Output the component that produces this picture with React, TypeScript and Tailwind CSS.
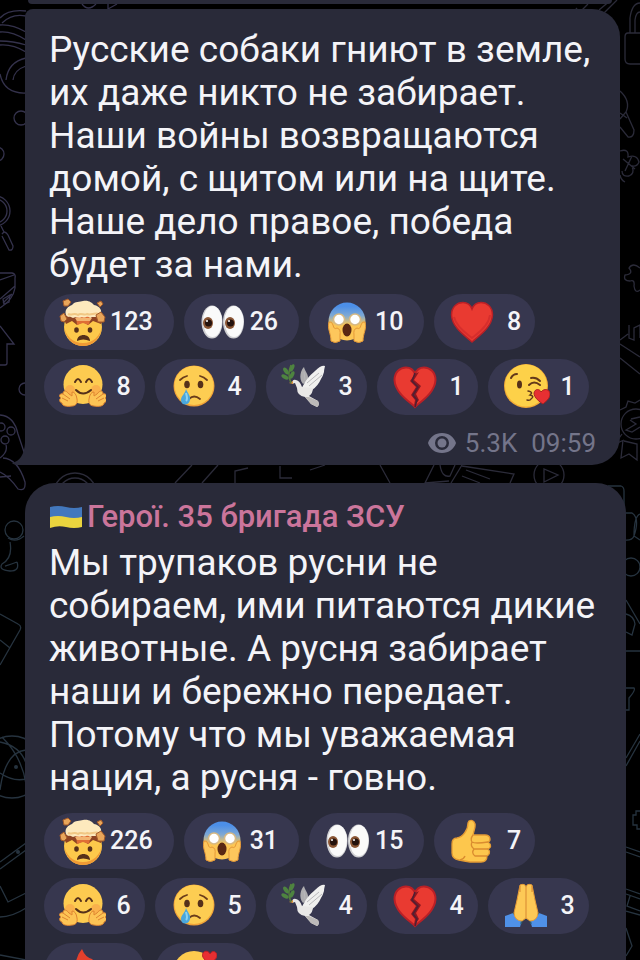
import type { ReactNode } from "react"

const HEART = "M24 44C19 39 4 30 3.500 17C3.500 9 9 4.500 15 4.500C19.500 4.500 22.500 7 24 11C25.500 7 28.500 4.500 33 4.500C39 4.500 44.500 9 44.500 17C44 30 29 39 24 44Z"

const emojis: Record<string, ReactNode> = {
    exploding: <>
        <circle cx="25" cy="29" r="19" fill="#fdc94b" />
        <path d="M6 27C7 41 15 48 25 48S43 41 44 27C43 38 35 45 25 45S7 38 6 27Z" fill="#f09a35" />
        <path d="M5 19L13 15H38L46 19L43 26L35 23L30 27L25 24L19 27L14 23L8 26Z" fill="#8e4423" />
        <path d="M18 18H33L31 27L25 25L19 27Z" fill="#df6f35" />
        <path d="M17 20H34L32 23H19Z" fill="#f3b470" />
        <path d="M8 17C6 11 11 8 14 7C17 3 22 4 25 3C31 2 34 5 36 7C42 8 45 13 42 17C39 20 35 18 32 20C29 17 27 21 24 19C21 21 18 18 15 20C12 18 10 20 8 17Z" fill="#fde9bd" />
        <path d="M10 16C14 18 16 14 20 17C23 14 26 18 29 16C33 18 36 14 41 16" stroke="#f1c784" strokeWidth="2" fill="none" />
        <g fill="#e9a65a" stroke="#a55a28" strokeWidth="1">
            <path d="M5 3L10 1L13 4L10 8L6 8Z" />
            <path d="M39 5L43 3L45 6L42 9Z" />
            <path d="M2 18L6 15L9 21L6 24L3 23Z" />
            <path d="M38 17L43 14L47 19L46 24L40 24Z" />
        </g>
        <g fill="#56301a">
            <ellipse cx="18.500" cy="32" rx="2.300" ry="2.800" />
            <ellipse cx="32" cy="32" rx="2.300" ry="2.800" />
            <path d="M19 43C19 35 32 35 32 43Q25 40 19 43Z" />
        </g>
    </>,
    hugging: <>
        <circle cx="25" cy="21.500" r="19.500" fill="#fdcb50" />
        <circle cx="12" cy="27" r="5" fill="#f9a04a" opacity=".6" />
        <circle cx="38" cy="27" r="5" fill="#f9a04a" opacity=".6" />
        <g stroke="#55301a" strokeWidth="2" fill="none" strokeLinecap="round">
            <path d="M17 19Q20 13 23 19M28 19Q31 13 34 19" />
            <path d="M18 27Q25 34 33 27" />
        </g>
        <g fill="#fdc455" stroke="#de8531" strokeWidth="1">
            <path d="M14 43C9 44 4 43 4 40C1 39 1 36 3 35C0 33 2 30 5 31C5 27 8 27 11 31L14 33L14 29Q18 29 19 36C20 41 17 43 14 43Z" />
            <path d="M36 43C41 44 46 43 46 40C49 39 49 36 47 35C50 33 48 30 45 31C45 27 42 27 39 31L36 33L36 29Q32 29 31 36C30 41 33 43 36 43Z" />
        </g>
        <path d="M4 35L10 38M5 31L12 36M46 35L40 38M45 31L38 36" stroke="#de8531" fill="none" />
    </>,
    crying: <>
        <circle cx="25" cy="23" r="20.500" fill="#f0a238" />
        <circle cx="25" cy="22.500" r="19.500" fill="#fdcd52" />
        <g fill="#55301a">
            <ellipse cx="18" cy="21.500" rx="2.800" ry="3.800" />
            <ellipse cx="31.500" cy="21.500" rx="2.800" ry="3.800" />
        </g>
        <g stroke="#6b3d1a" strokeWidth="1.800" fill="none" strokeLinecap="round">
            <path d="M11 17Q14 14 18 13M38 17Q35 14 31 13M20 36Q25 31 31 36" />
        </g>
        <path d="M17 26C19 31 22 33 21 37C20 43 12 43 12 37C12 33 16 31 17 26Z" fill="#4aa7dd" />
        <path d="M17 30C18 34 19 36 17 38" stroke="#8cd3f3" strokeWidth="2" fill="none" />
    </>,
    dove: <>
        <path d="M23 21C18 15 21 7 24 4C25 9 29 11 28 18Z" fill="#aeadb0" />
        <path d="M21 27C25 18 29 13 35 8Q41 2 45 3Q44 7 44 9Q43 13 41 16Q38 23 32 27Z" fill="#f0f0ef" />
        <path d="M12 21Q12 16 16 17Q20 18 22 24L33 25Q33 30 29 33L38 38Q40 42 37 44L31 41L25 34Q17 33 17 25L15 20Z" fill="#e9e8e7" />
        <path d="M29 34L38 38Q40 42 37 44L31 41L25 34Z" fill="#bdbab8" />
        <path d="M27 20L39 10M29 23L42 12M24 9L25 17M32 37L37 42" stroke="#b9b8bb" fill="none" />
        <path d="M13 18L9 20L13 21Z" fill="#d8913c" />
        <path d="M11 20Q7 11 11 2" stroke="#557d3a" strokeWidth="1.500" fill="none" />
        <g fill="#4e8440">
            <ellipse cx="6" cy="8" rx="2" ry="4" transform="rotate(-35 6 8)" />
            <ellipse cx="12" cy="5" rx="2" ry="4" transform="rotate(25 12 5)" />
            <ellipse cx="5" cy="14" rx="2" ry="4" transform="rotate(-60 5 14)" />
            <ellipse cx="12" cy="12" rx="2" ry="4" transform="rotate(25 12 12)" />
        </g>
    </>,
    eyes: <>
        <ellipse cx="14" cy="24" rx="10.500" ry="16.500" fill="#cfcfd2" />
        <ellipse cx="14.500" cy="23.500" rx="9.500" ry="15.500" fill="#fafafa" />
        <ellipse cx="35.500" cy="24" rx="10.500" ry="16.500" fill="#cfcfd2" />
        <ellipse cx="36" cy="23.500" rx="9.500" ry="15.500" fill="#fafafa" />
        <ellipse cx="10" cy="25" rx="5" ry="6" fill="#8a5635" />
        <ellipse cx="32" cy="25" rx="5" ry="6" fill="#8a5635" />
        <circle cx="10.500" cy="25" r="3.500" fill="#24120d" />
        <circle cx="32.500" cy="25" r="3.500" fill="#24120d" />
        <circle cx="9" cy="23" r="1" fill="#fff" />
        <circle cx="31" cy="23" r="1" fill="#fff" />
    </>,
    scream: <>
        <defs>
            <linearGradient id="fear" x2="0" y2="1">
                <stop offset=".1" stopColor="#4c8fe8" />
                <stop offset=".35" stopColor="#7fa9d4" />
                <stop offset=".58" stopColor="#fcc654" />
            </linearGradient>
        </defs>
        <ellipse cx="24" cy="23.500" rx="18.500" ry="19" fill="url(#fear)" />
        <g fill="#fff" stroke="#d7b983" strokeWidth="1.500">
            <circle cx="16" cy="21.500" r="5.500" />
            <circle cx="32" cy="21.500" r="5.500" />
        </g>
        <ellipse cx="24" cy="32" rx="4.500" ry="6.500" fill="#592713" />
        <g fill="#fdc75c" stroke="#e59838" strokeWidth="1">
            <path d="M6 24C4 31 8 35 8 43Q12 46 17 43L17 37Q18 31 14 30Q11 32 10 27Q9 23 6 24Z" />
            <path d="M42 24C44 31 40 35 40 43Q36 46 31 43L31 37Q30 31 34 30Q37 32 38 27Q39 23 42 24Z" />
        </g>
    </>,
    heart: <>
        <path d={HEART} fill="#e93a31" stroke="#b92026" strokeWidth="1.500" />
        <path d="M42 17C41 28 29 36 24 40C19 36 8 29 6 19" stroke="#c9262a" strokeWidth="2" fill="none" opacity=".6" />
    </>,
    broken: <>
        <path d={HEART} fill="#e93a31" stroke="#b92026" strokeWidth="2" />
        <path d="M22 8L24 11L19 18L25 24L20 32L24 37L23 43L28 37L25 31L30 23L23 17L28 9L24 11Z" fill="#8c1820" />
        <path d="M24 10L21 18L27 24L22 32L26 37L24 44" stroke="#4d2034" strokeWidth="1.500" fill="none" />
    </>,
    kiss: <>
        <circle cx="24" cy="23" r="22" fill="#f2ab35" />
        <circle cx="24" cy="22.500" r="21" fill="#fdd149" />
        <ellipse cx="17.500" cy="21.500" rx="2.500" ry="4" fill="#55301a" />
        <g stroke="#63391a" strokeWidth="2" fill="none" strokeLinecap="round">
            <path d="M9 15Q11 11 15 11M29 15Q34 14 38 18M27 22Q32 17 38 22" />
            <path d="M26 28Q32 29 28 32Q33 33 29 36Q28 38 25 37" strokeWidth="1.500" />
        </g>
        <path d="M41 41C38 39 32 35 32 30C33 25 38 26 39 29C42 25 48 26 48 31C48 36 43 39 41 41Z" fill="#e72f32" stroke="#a92122" />
    </>,
    thumb: <>
        <path d="M21 4C25 2 28 6 27 10L25 18H37C43 18 43 24 40 25C44 28 43 31 40 32C43 35 41 38 39 39C39 43 37 45 33 45H22Q16 44 11 43Q4 42 4 36V27Q4 21 9 21C15 20 20 13 20 6Z" fill="#fdc74d" stroke="#e49b34" strokeWidth="1.300" />
        <path d="M25 18Q22 22 24 25Q27 27 40 25M24 25Q22 29 26 32L40 32M26 32Q23 36 27 39H39M12 43Q16 42 17 39" stroke="#da8c2f" strokeWidth="1.300" fill="none" />
    </>,
    pray: <>
        <path d="M3 34L11 31L20 38L18 45H3Z" fill="#4f91e8" />
        <path d="M45 34L37 31L28 38L30 45H45Z" fill="#4f91e8" />
        <path d="M11 31L20 38L19 42M37 31L28 38L29 42" stroke="#2b5f77" strokeWidth="1.500" fill="none" />
        <path d="M24 5Q23 1 18 3L15 18L12 31Q13 39 20 39L24 36L28 39Q35 39 36 31L33 18L30 3Q25 1 24 5Z" fill="#fdc956" stroke="#e69b36" />
        <path d="M24 5V36M18 4V10M30 4V10" stroke="#d78731" fill="none" />
    </>,
    fire: <>
        <path d="M24 2Q27 10 34 12Q42 20 42 29C42 40 34 46 24 46S6 40 6 29Q7 22 12 18Q14 22 18 20Q17 10 24 2Z" fill="#e4402c" />
        <path d="M25 20Q35 28 34 36Q32 44 24 44Q15 43 15 35Q16 30 20 29Q22 27 25 20Z" fill="#fbb639" />
    </>,
    adoring: <>
        <circle cx="25" cy="25" r="21" fill="#fdcb4e" />
        <path d="M16 23Q19 17 22 23M28 23Q31 17 34 23M17 30Q25 37 33 30" stroke="#55301a" strokeWidth="2" fill="none" />
        <path d="M40 17C36 13 32 10 34 6C36 3 40 4 41 7C43 3 48 4 48 9C47 13 43 15 40 17Z" fill="#e72f32" stroke="#b92026" />
    </>,
}

type ReactionData = { emoji: string; count?: number }

function Reaction({ emoji, count }: ReactionData) {
    const pad = !count || count < 10 ? "min-w-[39px] pl-[10px] pr-[14px]" : "pl-1 pr-[21px]"
    return (
        <button aria-label={`${emoji} ${count ?? ""}`} className="flex h-14 items-center rounded-full bg-[#37374f] pl-[14px]">
            <svg viewBox="0 0 48 48" className="h-12 w-12 shrink-0" aria-hidden="true">{emojis[emoji]}</svg>
            <span className={`text-[25px] leading-7 font-medium text-[#f4f4f8] ${pad}`}>{count}</span>
        </button>
    )
}

function Reactions({ rows }: { rows: ReactionData[][] }) {
    return (
        <div className="-ml-[5px] flex flex-col gap-[9px]">
            {rows.map((row, i) => (
                <div key={i} className="flex gap-[10px]">
                    {row.map((r) => <Reaction key={r.emoji} {...r} />)}
                </div>
            ))}
        </div>
    )
}

function MessageText({ lines }: { lines: string[] }) {
    return (
        <p className="text-[37px] leading-[43px] whitespace-nowrap text-[#f4f4f8]">
            {lines.map((line) => <span key={line} className="block">{line}</span>)}
        </p>
    )
}

function Wallpaper() {
    return (
        <svg viewBox="0 0 640 960" preserveAspectRatio="xMidYMid slice" aria-hidden="true"
            className="absolute inset-0 -z-10 h-full w-full" fill="none" strokeWidth="1.300">
            <g stroke="#34324c">
                <path d="M0 18Q8 9 26 11M2 23Q12 13 26 16M0 25Q12 24 26 32M0 32Q12 31 26 40M0 41Q13 41 26 45M0 45Q13 44 26 52" />
                <path d="M26 58Q8 62 6 80M26 66Q14 70 13 80M0 74Q4 94 26 93" />
                <path d="M82 4Q88 12 96 4M108 4V9L117 4" />
                <circle cx="21" cy="118" r="7" />
                <circle cx="-3" cy="154" r="7" />
                <circle cx="-5" cy="211" r="15" />
                <circle cx="-5" cy="211" r="12" />
                <path d="M1 226L4 232M2 234Q5 230 8 235L13 246Q13 251 9 250L2 236" />
                <path d="M0 273H12Q16 274 15 278V288Q13 300 0 308M0 280L14 275M0 299L15 286M3 303L12 294" />
                <path d="M3 299L10 295L9 302L4 304Z" />
                <path d="M0 326L14 344H7V363Q7 365 5 365H0" />
                <circle cx="25" cy="389" r="6" />
                <path d="M0 415Q14 416 18 434L25 455M0 458Q8 452 6 445M3 458Q18 459 25 482Q26 492 18 489Q9 476 0 472M0 477L11 476" />
                <circle cx="1" cy="427" r="4" />
                <circle cx="11" cy="431" r="4" />
                <circle cx="5" cy="440" r="4" />
            </g>
            <g stroke="#2b2b39">
                <circle cx="75" cy="495" r="22" />
                <circle cx="75" cy="495" r="17" />
                <path d="M192 465L175 483M218 465L202 483M235 483V471L248 468M280 466V478H292M310 470L325 465M380 465L390 483M434 465L425 483L449 481M440 465Q442 478 450 476L455 465M462 465L451 483M462 466L514 474L510 483M466 470L490 479M462 476L480 483" />
                <circle cx="549" cy="475" r="15" />
                <path d="M544 469V482L558 475Z" />
                <path d="M577 8L573 13M588 4L580 12M617 0L603 14M611 0L599 10" />
                <path d="M640 33H628Q625 33 625 37V59Q625 64 630 64H640M630 33V18Q632 3 640 3M635 33V20Q636 12 640 12" />
                <path d="M620 91Q631 101 626 112L620 119M626 112L634 130Q634 138 628 137L620 127M620 113L627 118" />
                <path d="M620 151Q629 148 628 157Q637 154 639 162Q637 167 632 166Q635 174 629 176Q622 177 622 171M623 159L635 169M632 156L625 171M620 175Q621 180 625 182" />
                <path d="M640 268Q633 262 629 268Q634 274 625 275Q623 281 630 281Q635 279 634 286Q635 294 640 290" />
                <path d="M629 325V338L634 340V328L640 325V338M620 344L640 357M620 358L640 374M620 340L628 334" />
                <circle cx="636" cy="424" r="15" />
                <path d="M620 410L626 407L628 401L635 403L640 400M622 434L615 444L624 440M623 440L621 458L629 454L637 460V444L624 441M631 419L640 417M630 420L636 424L626 430L632 432L640 427" />
            </g>
            <g stroke="#26333f">
                <path d="M608 486H621Q624 487 624 491V512M610 494L620 498M624 513H632Q640 518 634 536Q632 541 624 540M640 514Q634 516 634 536L640 540" />
                <circle cx="631" cy="567" r="9" />
                <path d="M626 600L640 624M626 614Q634 616 635 624L632 635L626 632M626 651H640M626 688H634Q636 690 629 698L629 710H626M640 734L626 758M640 741L626 766" />
                <path d="M640 811H636V815H633V825H637V829H640M626 847L640 852M626 852L640 857M626 889L640 894M626 894L640 899M630 896L627 906L640 911M626 911L640 915M626 928L632 946L626 956" />
                <circle cx="14" cy="530" r="9" />
                <path d="M8 538Q16 543 24 536M10 542Q13 558 2 564Q-2 570 10 571Q20 571 17 562M5 566Q12 564 17 562" />
                <path d="M0 614L18 624Q22 626 20 630L0 665M0 640L10 648" />
                <circle cx="12" cy="767" r="31" />
                <path d="M0 742Q20 746 26 763M26 750Q5 752 0 790M2 737Q22 757 26 784M0 773Q13 782 26 779" />
                <path d="M0 862L26 843M0 869L26 850M0 886L8 902L26 893M0 917Q12 917 26 908M0 955L26 960" />
            </g>
            <g fill="#26333f">
                <circle cx="16" cy="767" r="2" />
                <circle cx="18" cy="852" r="2" />
            </g>
        </svg>
    )
}

const firstReactions: ReactionData[][] = [
    [
        { emoji: "exploding", count: 123 },
        { emoji: "eyes", count: 26 },
        { emoji: "scream", count: 10 },
        { emoji: "heart", count: 8 },
    ],
    [
        { emoji: "hugging", count: 8 },
        { emoji: "crying", count: 4 },
        { emoji: "dove", count: 3 },
        { emoji: "broken", count: 1 },
        { emoji: "kiss", count: 1 },
    ],
]

const secondReactions: ReactionData[][] = [
    [
        { emoji: "exploding", count: 226 },
        { emoji: "scream", count: 31 },
        { emoji: "eyes", count: 15 },
        { emoji: "thumb", count: 7 },
    ],
    [
        { emoji: "hugging", count: 6 },
        { emoji: "crying", count: 5 },
        { emoji: "dove", count: 4 },
        { emoji: "broken", count: 4 },
        { emoji: "pray", count: 3 },
    ],
    [
        { emoji: "fire" },
        { emoji: "adoring" },
    ],
]

export default function App() {
    return (
        <main className="relative isolate flex h-screen flex-col overflow-hidden bg-black font-['Roboto','Noto_Sans',sans-serif]">
            <Wallpaper />
            <div className="mx-7 h-1 shrink-0 rounded-b-full bg-[#292a39]" />

            <article className="relative mt-[5px] mr-5 ml-[25px] shrink-0 rounded-tl-lg rounded-r-[28px] bg-[#292a39] pt-[19px] pr-6 pb-2 pl-6">
                <MessageText lines={[
                    "Русские собаки гниют в земле,",
                    "их даже никто не забирает.",
                    "Наши войны возвращаются",
                    "домой, с щитом или на щите.",
                    "Наше дело правое, победа",
                    "будет за нами.",
                ]} />
                <div className="mt-2">
                    <Reactions rows={firstReactions} />
                </div>
                <div className="mt-[14px] flex h-7 items-center justify-end text-[26px] leading-7 text-[#74758a]">
                    <svg viewBox="0 0 30 22" className="mr-2 h-[22px] w-[30px]" aria-hidden="true">
                        <path fillRule="evenodd" fill="currentColor" d="M15 1C8 1 3 5 1 11C3 17 8 21 15 21S27 17 29 11C27 5 22 1 15 1ZM15 4A7 7 0 1 1 15 18A7 7 0 1 1 15 4Z" />
                        <circle cx="15" cy="11" r="4.500" fill="currentColor" />
                    </svg>
                    <span>5.3K</span>
                    <time className="ml-[14px]">09:59</time>
                </div>
                <svg viewBox="0 0 14 36" className="absolute bottom-0 -left-[13px] h-9 w-[14px]" aria-hidden="true">
                    <path d="M13 0V14Q12 31 0 34Q2 36 7 36H14V0Z" fill="#292a39" />
                </svg>
            </article>

            <article className="mt-[18px] mr-[14px] ml-[25px] shrink-0 rounded-t-[30px] bg-[#292a39] pt-4 pr-6 pb-6 pl-6">
                <h2 className="flex items-center text-[31px] leading-9 font-medium whitespace-nowrap text-[#cb759b]">
                    <svg viewBox="0 0 34 24" className="mr-1 h-6 w-[34px]" aria-hidden="true">
                        <path d="M1 2Q9 0 17 2T33 2V13H1Z" fill="#4378bd" />
                        <path d="M1 12Q9 10 17 12T33 12V22Q25 24 17 22T1 23Z" fill="#ead43e" />
                    </svg>
                    Герої. 35 бригада ЗСУ
                </h2>
                <div className="mt-[6px]">
                    <MessageText lines={[
                        "Мы трупаков русни не",
                        "собираем, ими питаются дикие",
                        "животные. А русня забирает",
                        "наши и бережно передает.",
                        "Потому что мы уважаемая",
                        "нация, а русня - говно.",
                    ]} />
                </div>
                <div className="mt-[14px]">
                    <Reactions rows={secondReactions} />
                </div>
            </article>
        </main>
    )
}
